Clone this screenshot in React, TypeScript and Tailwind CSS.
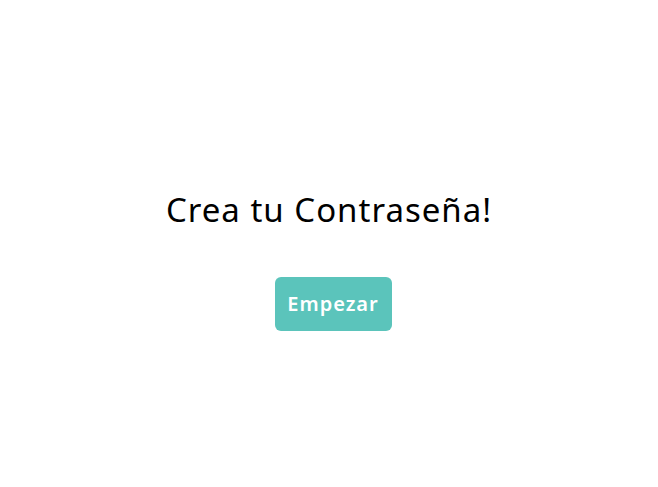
export default function App() {
  return (
    <div
      className="flex h-[487px] w-full flex-col items-center bg-white pt-[187px]"
      style={{ fontFamily: '"Noto Sans", Lato, sans-serif' }}
    >
      <h1 className="text-[33px] leading-[46px] font-normal tracking-[1px] text-black">Crea tu Contraseña!</h1>
      <button className="mt-[44px] ml-[8px] h-[54px] w-[117px] rounded-[6px] bg-[#5bc4bb] text-[20px] font-semibold tracking-[1px] text-white">
        Empezar
      </button>
    </div>
  );
}
